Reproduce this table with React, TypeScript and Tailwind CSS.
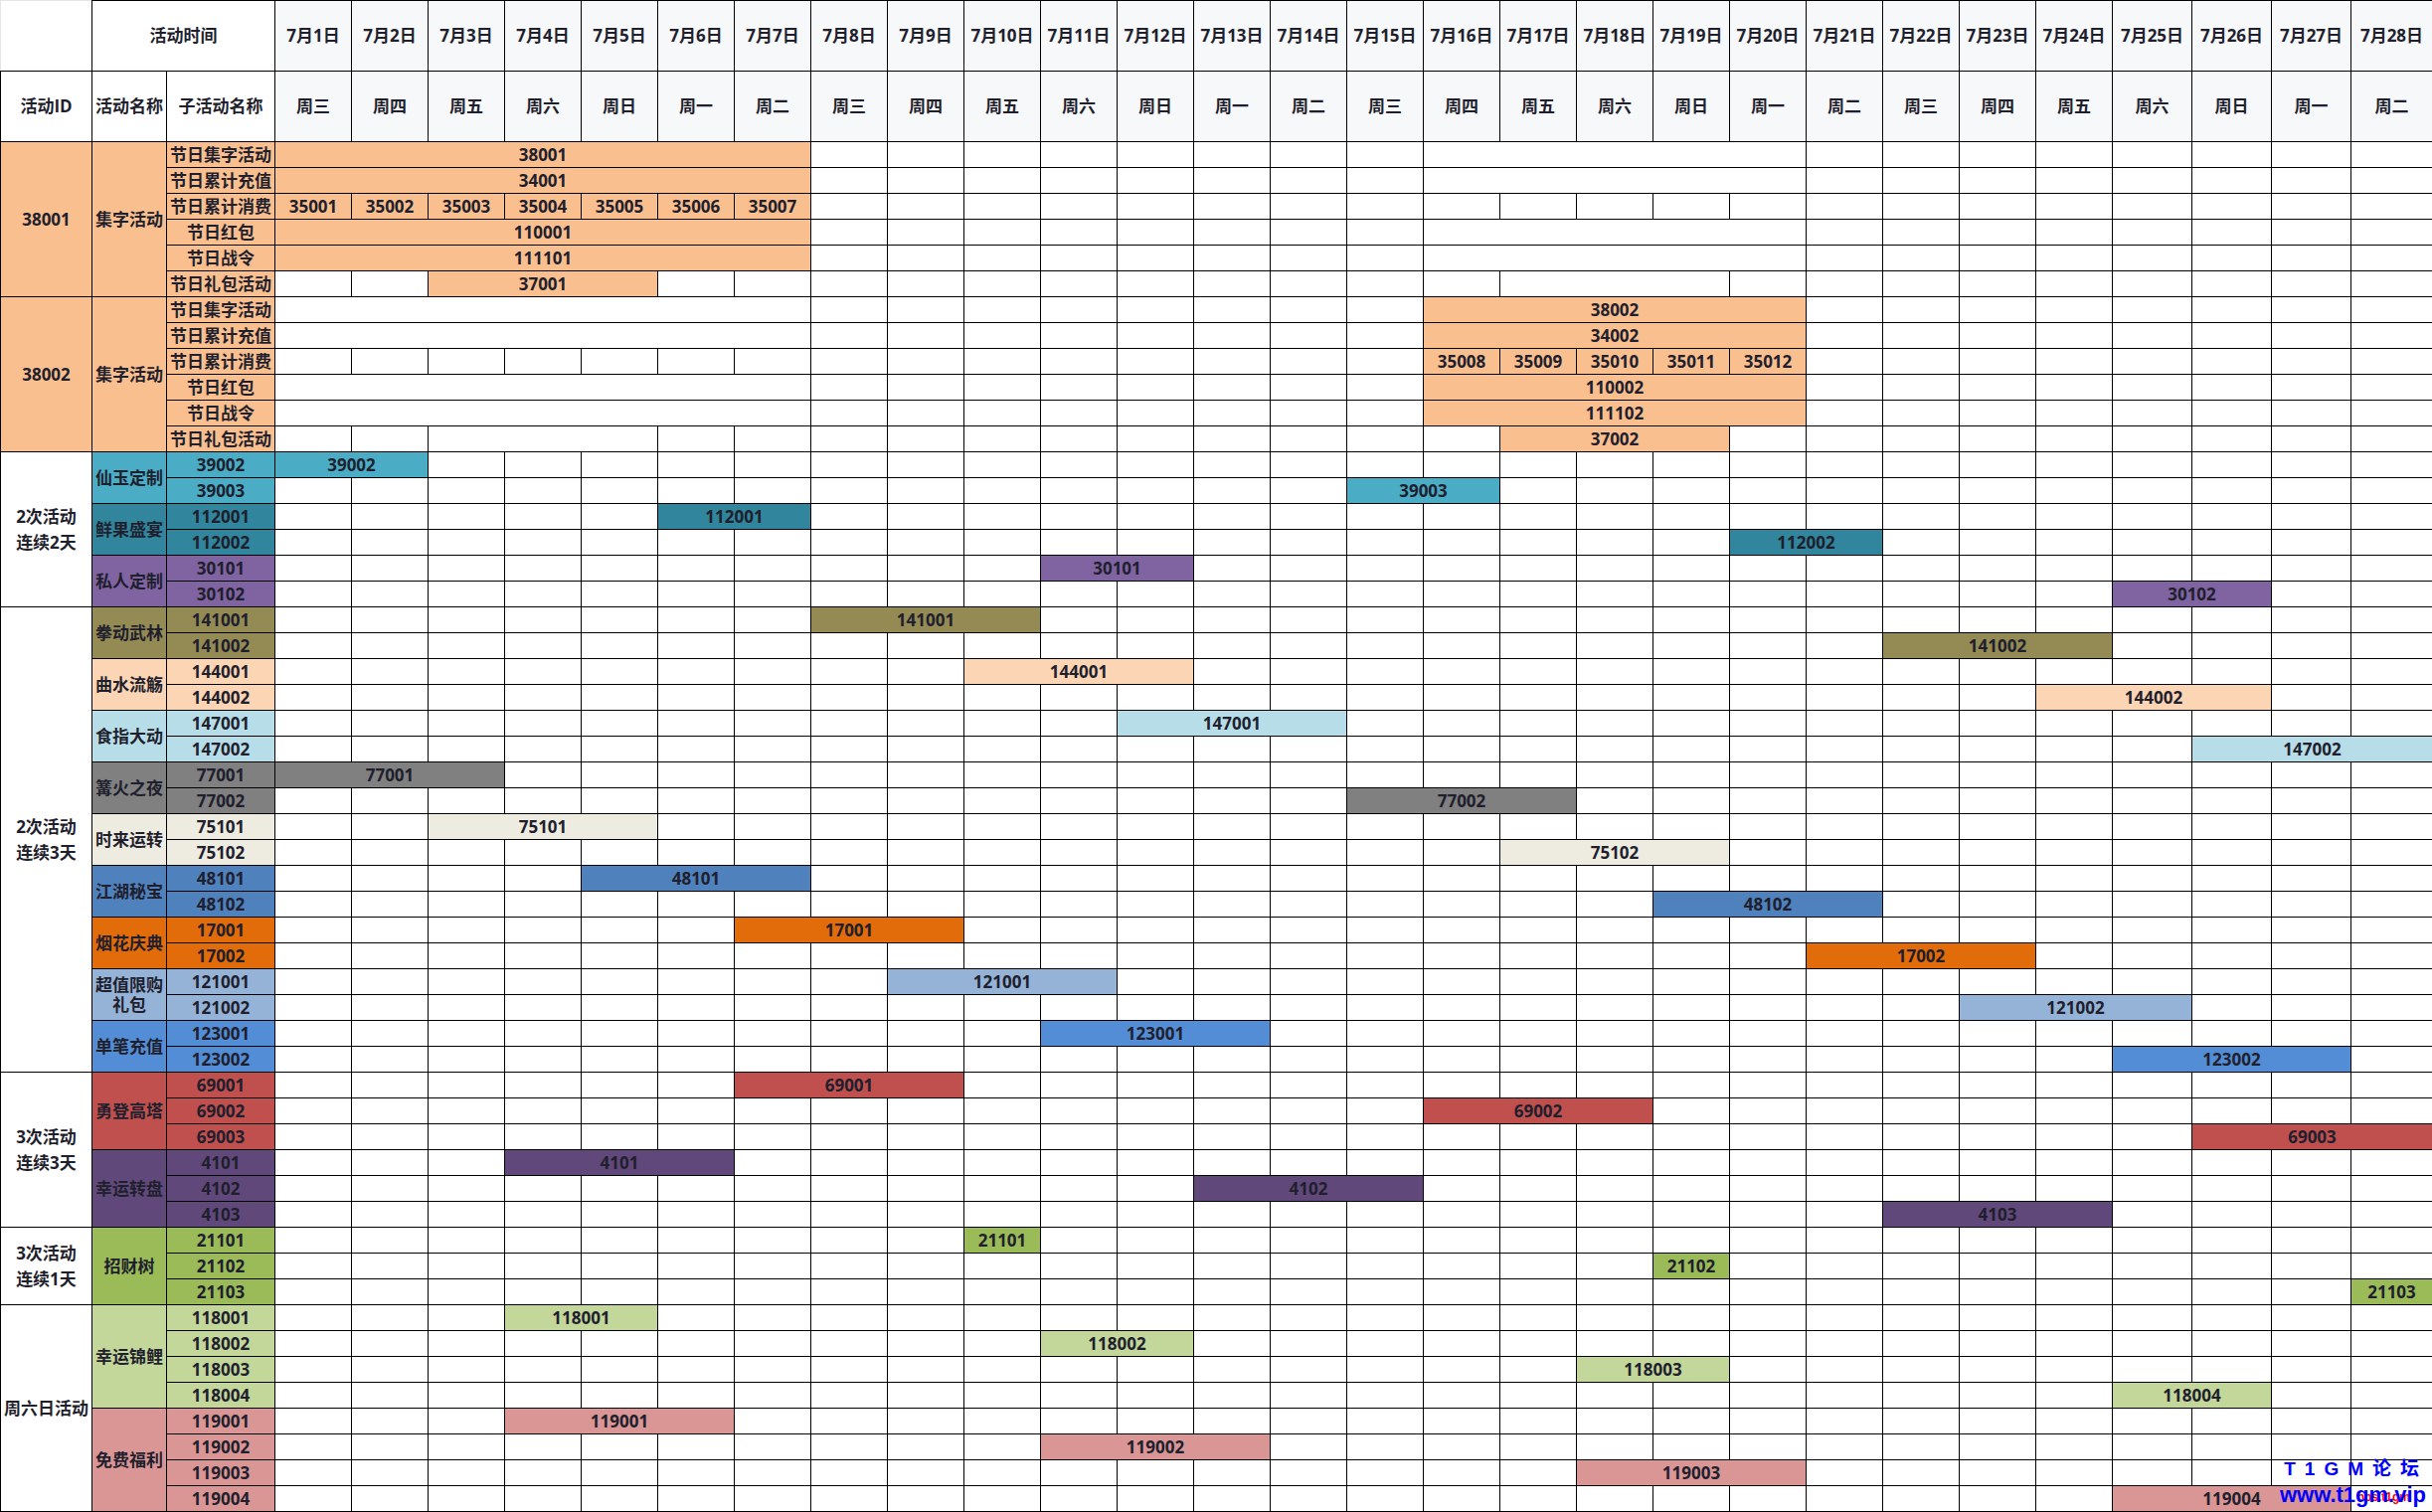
import React from "react"

// Schedule sheet for July activities

interface Seg {
  from: number
  to: number
  text?: string
  bg?: string
}

interface Sub {
  name: string
  segs: Seg[]
}

interface Act {
  name: string
  bg: string
  subs: Sub[]
}

interface Group {
  lines: string[]
  bg: string
  acts: Act[]
}

const O = "bg-[#FABF8F]"
const WEEK = ["周三", "周四", "周五", "周六", "周日", "周一", "周二"]
const DAYS = Array.from({ length: 28 }, (_, i) => i + 1)

const COLS = [
  "w-[92px]",
  "w-[75px]",
  "w-[109px]",
  ...Array(24).fill("w-[77px]"),
  "w-[80px]",
  "w-[80px]",
  "w-[80px]",
  "w-[82px]",
]

const bar = (from: number, to: number, text?: string, bg?: string): Seg => ({ from, to, text, bg })

// activity whose sub rows are named by their own id
const simple = (name: string, bg: string, items: [string, number, number][]): Act => ({
  name,
  bg,
  subs: items.map(([id, from, to]) => ({ name: id, segs: [bar(from, to, id, bg)] })),
})

const GROUPS: Group[] = [
  {
    lines: ["38001"],
    bg: O,
    acts: [
      {
        name: "集字活动",
        bg: O,
        subs: [
          { name: "节日集字活动", segs: [bar(1, 7, "38001", O), bar(16, 20)] },
          { name: "节日累计充值", segs: [bar(1, 7, "34001", O), bar(16, 20)] },
          { name: "节日累计消费", segs: [1, 2, 3, 4, 5, 6, 7].map((i) => bar(i, i, `3500${i}`, O)) },
          { name: "节日红包", segs: [bar(1, 7, "110001", O), bar(16, 20)] },
          { name: "节日战令", segs: [bar(1, 7, "111101", O), bar(16, 20)] },
          { name: "节日礼包活动", segs: [bar(3, 5, "37001", O), bar(17, 19)] },
        ],
      },
    ],
  },
  {
    lines: ["38002"],
    bg: O,
    acts: [
      {
        name: "集字活动",
        bg: O,
        subs: [
          { name: "节日集字活动", segs: [bar(1, 7), bar(16, 20, "38002", O)] },
          { name: "节日累计充值", segs: [bar(1, 7), bar(16, 20, "34002", O)] },
          {
            name: "节日累计消费",
            segs: [
              bar(16, 16, "35008", O),
              bar(17, 17, "35009", O),
              bar(18, 18, "35010", O),
              bar(19, 19, "35011", O),
              bar(20, 20, "35012", O),
            ],
          },
          { name: "节日红包", segs: [bar(1, 7), bar(16, 20, "110002", O)] },
          { name: "节日战令", segs: [bar(1, 7), bar(16, 20, "111102", O)] },
          { name: "节日礼包活动", segs: [bar(3, 5), bar(17, 19, "37002", O)] },
        ],
      },
    ],
  },
  {
    lines: ["2次活动", "连续2天"],
    bg: "bg-white",
    acts: [
      simple("仙玉定制", "bg-[#4BACC6]", [["39002", 1, 2], ["39003", 15, 16]]),
      simple("鲜果盛宴", "bg-[#31859C]", [["112001", 6, 7], ["112002", 20, 21]]),
      simple("私人定制", "bg-[#8064A2]", [["30101", 11, 12], ["30102", 25, 26]]),
    ],
  },
  {
    lines: ["2次活动", "连续3天"],
    bg: "bg-white",
    acts: [
      simple("拳动武林", "bg-[#948A54]", [["141001", 8, 10], ["141002", 22, 24]]),
      simple("曲水流觞", "bg-[#FCD5B4]", [["144001", 10, 12], ["144002", 24, 26]]),
      simple("食指大动", "bg-[#B7DEE8]", [["147001", 12, 14], ["147002", 26, 28]]),
      simple("篝火之夜", "bg-[#808080]", [["77001", 1, 3], ["77002", 15, 17]]),
      simple("时来运转", "bg-[#EEECE1]", [["75101", 3, 5], ["75102", 17, 19]]),
      simple("江湖秘宝", "bg-[#4F81BD]", [["48101", 5, 7], ["48102", 19, 21]]),
      simple("烟花庆典", "bg-[#E26B0A]", [["17001", 7, 9], ["17002", 21, 23]]),
      simple("超值限购礼包", "bg-[#95B3D7]", [["121001", 9, 11], ["121002", 23, 25]]),
      simple("单笔充值", "bg-[#538DD5]", [["123001", 11, 13], ["123002", 25, 27]]),
    ],
  },
  {
    lines: ["3次活动", "连续3天"],
    bg: "bg-white",
    acts: [
      simple("勇登高塔", "bg-[#C0504D]", [["69001", 7, 9], ["69002", 16, 18], ["69003", 26, 28]]),
      simple("幸运转盘", "bg-[#60497A]", [["4101", 4, 6], ["4102", 13, 15], ["4103", 22, 24]]),
    ],
  },
  {
    lines: ["3次活动", "连续1天"],
    bg: "bg-white",
    acts: [simple("招财树", "bg-[#9BBB59]", [["21101", 10, 10], ["21102", 19, 19], ["21103", 28, 28]])],
  },
  {
    lines: ["周六日活动"],
    bg: "bg-white",
    acts: [
      simple("幸运锦鲤", "bg-[#C4D79B]", [
        ["118001", 4, 5],
        ["118002", 11, 12],
        ["118003", 18, 19],
        ["118004", 25, 26],
      ]),
      simple("免费福利", "bg-[#DA9694]", [
        ["119001", 4, 6],
        ["119002", 11, 13],
        ["119003", 18, 20],
        ["119004", 25, 27],
      ]),
    ],
  },
]

const cell = "border border-black p-0 text-center align-middle leading-[20px]"

function DayCells({ segs }: { segs: Seg[] }) {
  const out: React.ReactNode[] = []
  let d = 1
  while (d <= 28) {
    const s = segs.find((x) => x.from === d)
    if (s) {
      out.push(
        <td key={d} colSpan={s.to - s.from + 1} className={`${cell} ${s.bg ?? "bg-white"}`}>
          {s.text}
        </td>
      )
      d = s.to + 1
    } else {
      out.push(<td key={d} className={`${cell} bg-white`} />)
      d++
    }
  }
  return <>{out}</>
}

export default function App() {
  return (
    <div className="relative h-[1521px] w-[2446px] overflow-hidden bg-white font-['Open_Sans','Noto_Sans_CJK_SC',sans-serif] text-[17px] font-bold text-[#1f1f2e]">
      <table className="w-[2446px] table-fixed border-collapse">
        <colgroup>
          {COLS.map((w, i) => (
            <col key={i} className={w} />
          ))}
        </colgroup>
        <thead>
          <tr className="h-[71px]">
            <td className="border border-t-[#e5e5e5] border-l-[#e5e5e5] border-r-black border-b-black p-0" />
            <td colSpan={2} className={cell}>
              活动时间
            </td>
            {DAYS.map((d) => (
              <td key={d} className={`${cell} bg-[#F7F8FA]`}>
                7月{d}日
              </td>
            ))}
          </tr>
          <tr className="h-[71px]">
            <td className={cell}>活动ID</td>
            <td className={cell}>活动名称</td>
            <td className={cell}>子活动名称</td>
            {DAYS.map((d) => (
              <td key={d} className={`${cell} bg-[#F7F8FA]`}>
                {WEEK[(d - 1) % 7]}
              </td>
            ))}
          </tr>
        </thead>
        <tbody>
          {GROUPS.map((g, gi) => {
            const total = g.acts.reduce((n, a) => n + a.subs.length, 0)
            return g.acts.map((a, ai) =>
              a.subs.map((s, si) => (
                <tr key={`${gi}-${ai}-${si}`} className="h-[26px]">
                  {ai === 0 && si === 0 && (
                    <td rowSpan={total} className={`${cell} ${g.bg}`}>
                      {g.lines.map((l) => (
                        <div key={l} className="leading-[26px]">
                          {l}
                        </div>
                      ))}
                    </td>
                  )}
                  {si === 0 && (
                    <td rowSpan={a.subs.length} className={`${cell} ${a.bg} px-[2px] leading-[18px]`}>
                      {a.name}
                    </td>
                  )}
                  <td className={`${cell} ${a.bg} whitespace-nowrap`}>{s.name}</td>
                  <DayCells segs={s.segs} />
                </tr>
              ))
            )
          })}
        </tbody>
      </table>

      {/* forum watermark in the corner */}
      <div className="pointer-events-none absolute right-[4px] bottom-[33px] font-['Liberation_Sans','Noto_Sans_CJK_SC',sans-serif] text-[19px] leading-[20px] font-bold tracking-[9px] text-[#0000ff]">
        T1GM论坛
      </div>
      <div className="pointer-events-none absolute right-[22px] bottom-[9px] font-['Liberation_Sans',sans-serif] text-[12px] leading-[12px] font-bold text-[#ff0000]">
        bbs.t1gm
      </div>
      <div className="pointer-events-none absolute right-[6px] bottom-[5px] font-['Liberation_Sans',sans-serif] text-[22px] leading-[24px] font-bold text-[#0000ff]">
        www.t1gm.vip
      </div>
    </div>
  )
}
